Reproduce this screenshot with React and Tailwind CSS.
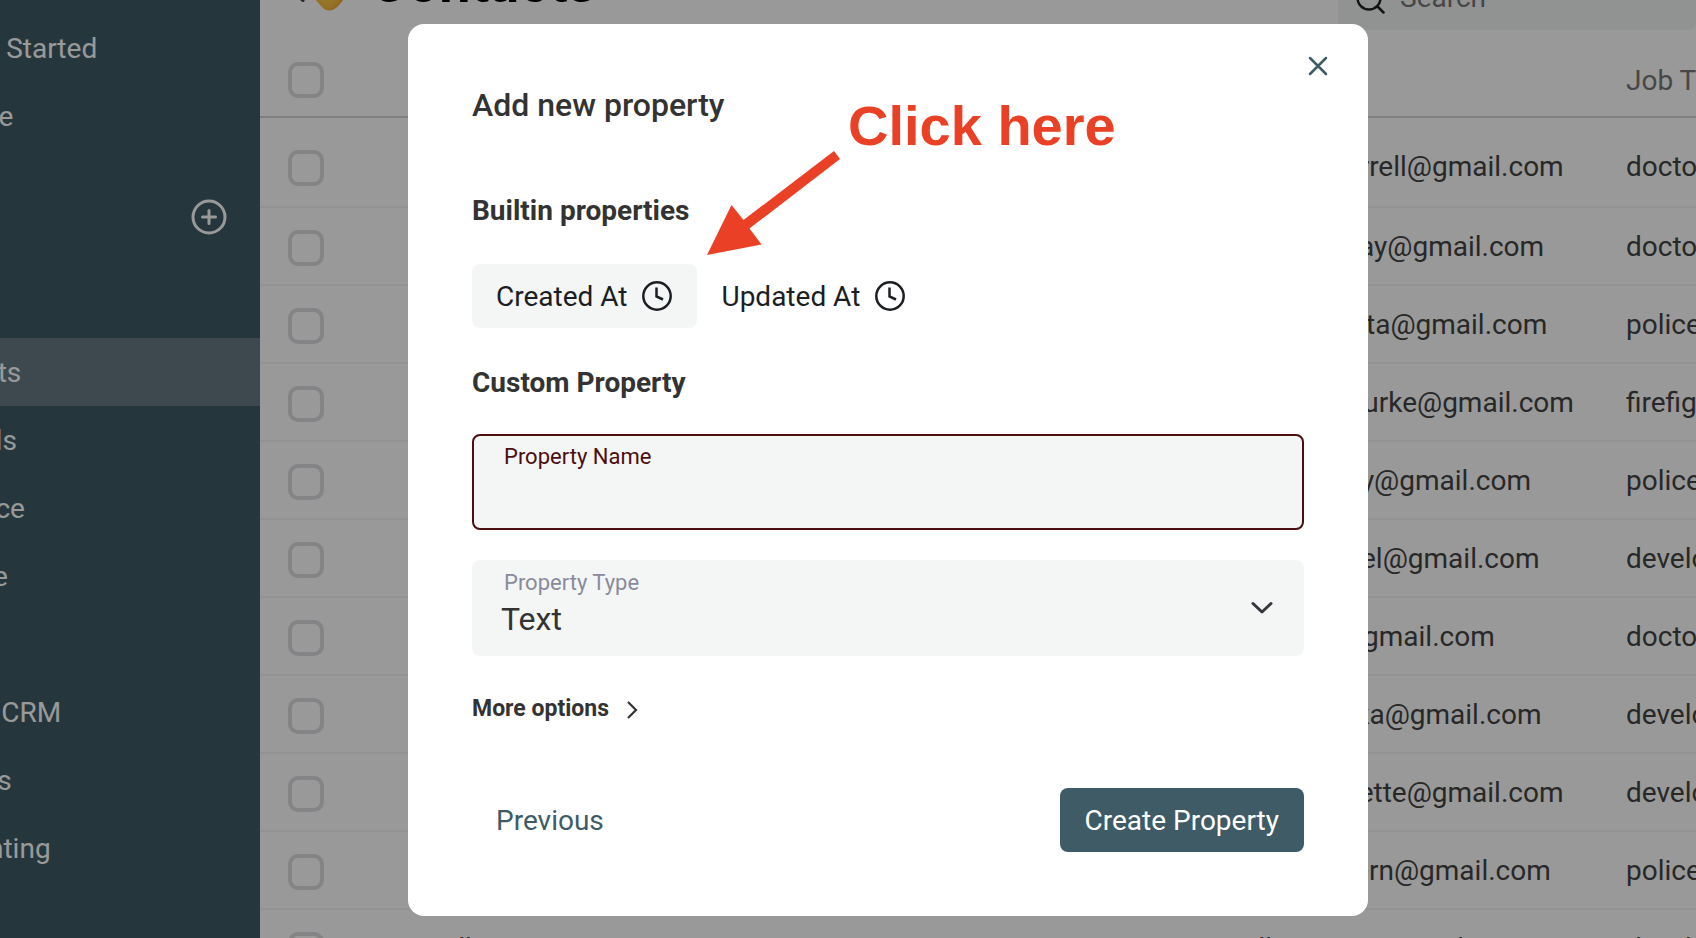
import React from "react";

const primaryLinks = ["Getting Started", "Upgrade"];
const navLinks = ["Contacts", "Rewards", "Audience", "Pipeline"];
const appLinks = ["Simple CRM", "Projects", "Accounting"];

const contacts = [
  ["Stephan", "Farrell", "stephan.farrell@gmail.com", "doctor"],
  ["Thomas", "Shay", "thomas.shay@gmail.com", "doctor"],
  ["Maria", "Acosta", "maria.acosta@gmail.com", "police officer"],
  ["Margaret", "Burke", "margaret.burke@gmail.com", "firefighter"],
  ["Henry", "Bailey", "henry.bailey@gmail.com", "police officer"],
  ["Olivia", "Michel", "olivia.michel@gmail.com", "developer"],
  ["Adam", "Fry", "adam.fry@gmail.com", "doctor"],
  ["Anton", "Slavka", "anton.slavka@gmail.com", "developer"],
  ["Laura", "Bonnette", "laura.bonnette@gmail.com", "developer"],
  ["John", "Northern", "john.northern@gmail.com", "police officer"],
  ["Millie", "Cross", "millie.cross@gmail.com", "developer"],
];

function NavLink({ label, active }) {
  return (
    <li>
      <a
        href="#"
        aria-current={active ? "page" : undefined}
        className={
          active
            ? "flex h-[68px] items-center bg-[#677b83] pt-0.5 text-white"
            : "flex h-[68px] items-center pt-0.5 text-white"
        }
      >
        <span className="-ml-[91px] whitespace-nowrap">{label}</span>
      </a>
    </li>
  );
}

function Sidebar() {
  return (
    <nav className="w-[260px] shrink-0 overflow-hidden bg-[#3e5b66] pt-[14px] text-[28px]">
      <ul>
        {primaryLinks.map((l) => (
          <NavLink key={l} label={l} />
        ))}
      </ul>
      <div className="mt-8 mb-[88px] flex h-[68px] items-center justify-end pt-0.5 pr-8">
        <button type="button" aria-label="Add object" className="text-white">
          <svg width="38" height="38" viewBox="0 0 38 38" fill="none" stroke="currentColor" strokeWidth="3" strokeLinecap="round">
            <circle cx="19" cy="19" r="16" />
            <path d="M19 12.5v13M12.5 19h13" />
          </svg>
        </button>
      </div>
      <ul>
        {navLinks.map((l) => (
          <NavLink key={l} label={l} active={l === "Contacts"} />
        ))}
      </ul>
      <ul className="mt-[68px]">
        {appLinks.map((l) => (
          <NavLink key={l} label={l} />
        ))}
      </ul>
    </nav>
  );
}

function Checkbox({ label }) {
  return (
    <input
      type="checkbox"
      aria-label={label}
      className="block size-9 appearance-none rounded-[10px] border-4 border-[#dcdddf]"
    />
  );
}

function ContactsPage() {
  return (
    <main className="min-w-0 flex-1 overflow-hidden bg-white">
      <header className="-mt-[50px] flex h-20 items-end justify-between">
        <div className="flex items-end pb-4 pl-7">
          <svg width="18" height="40" viewBox="0 0 18 40" className="mb-3" fill="none" stroke="#4a4a4a" strokeWidth="3" strokeLinecap="round">
            <path d="M15 20L4 29.500L15 38.500" />
          </svg>
          <svg width="46" height="52" viewBox="0 0 46 52" className="mb-0.5">
            <defs>
              <radialGradient id="gold" cx="0.45" cy="0.55" r="0.6">
                <stop offset="0" stopColor="#ffdc50" />
                <stop offset="0.7" stopColor="#f5b73c" />
                <stop offset="1" stopColor="#d07818" />
              </radialGradient>
            </defs>
            <path d="M3 26C3 10 12 4 22 4s19 8 19 22c0 8-3 14-8 19-5 6-12 8-18 1C10 40 3 34 3 26z" fill="url(#gold)" />
          </svg>
          <h1 className="ml-[18px] font-[Inter,sans-serif] text-[51px] leading-[60px] font-bold text-black">Contacts</h1>
        </div>
        <label className="flex h-20 w-[358px] items-end gap-3.5 rounded-lg bg-[#f1f6f4] pb-4 pl-[18px]">
          <svg width="30" height="30" viewBox="0 0 30 30" className="shrink-0" fill="none" stroke="#222" strokeWidth="2.500" strokeLinecap="round">
            <circle cx="13" cy="14" r="11.500" />
            <path d="M21.500 22.500L27.500 28.500" />
          </svg>
          <input
            type="search"
            aria-label="Search"
            placeholder="Search"
            className="h-8 w-full min-w-0 bg-transparent text-[28px] leading-8 outline-none placeholder:text-[#777]"
          />
        </label>
      </header>
      <table className="mt-3 w-[1766px] table-fixed border-separate border-spacing-0 text-left text-[28px] leading-[34px] text-[#444]">
        <colgroup>
          <col className="w-[167px]" />
          <col className="w-[400px]" />
          <col className="w-[400px]" />
          <col className="w-[399px]" />
          <col className="w-[400px]" />
        </colgroup>
        <thead>
          <tr>
            <th className="border-b-2 border-[#d6d6d6] pt-5 pb-[18px] pl-7">
              <Checkbox label="Select all" />
            </th>
            {["First Name", "Last Name", "Email", "Job Title"].map((h) => (
              <th key={h} className="border-b-2 border-[#d6d6d6] pt-5 pb-4 font-normal text-[#777]">
                {h}
              </th>
            ))}
          </tr>
        </thead>
        <tbody>
          {contacts.map((row, i) => {
            const pad =
              i === 0
                ? "border-b-2 border-[#f3f3f3] pt-8 pb-5 align-top"
                : "border-b-2 border-[#f3f3f3] pt-[22px] pb-[18px] align-top";
            return (
              <tr key={row[2]}>
                <td className={pad + " pl-7"}>
                  <Checkbox label={"Select " + row[0]} />
                </td>
                {row.map((cell, j) => (
                  <td key={j} className={pad}>
                    {cell}
                  </td>
                ))}
              </tr>
            );
          })}
        </tbody>
      </table>
    </main>
  );
}

function ClockIcon() {
  return (
    <svg width="32" height="32" viewBox="0 0 32 32" fill="none" stroke="currentColor" strokeWidth="2.500">
      <circle cx="16" cy="16" r="13.700" />
      <path d="M15.500 7.500V16.500L22 19.500" />
    </svg>
  );
}

function Annotation() {
  return (
    <>
      <svg className="pointer-events-none absolute top-[120px] left-[290px]" width="150" height="120" viewBox="0 0 150 120" fill="#ea4025" aria-hidden="true">
        <path d="M136 7L142 15L51.500 84.500L63.500 100.500L9 111L33.500 61L45.500 76Z" />
      </svg>
      <p className="pointer-events-none absolute top-[70px] left-[440px] font-['Liberation_Sans',sans-serif] text-[56px] leading-[64px] font-bold whitespace-nowrap text-[#ea4025]">
        Click here
      </p>
    </>
  );
}

function AddPropertyDialog() {
  return (
    <form
      role="dialog"
      aria-labelledby="dialog-title"
      className="relative flex w-full max-w-[960px] flex-col rounded-2xl bg-white px-16 pt-[60px] pb-16 text-[#333]"
    >
      <button type="button" aria-label="Close" className="absolute top-[26px] right-[34px] p-1 text-[#3e5b66]">
        <svg width="24" height="24" viewBox="0 0 24 24" fill="none" stroke="currentColor" strokeWidth="2.500" strokeLinecap="round">
          <path d="M4 4L20 20M20 4L4 20" />
        </svg>
      </button>
      <h2 id="dialog-title" className="text-[32px] leading-[42px] font-medium">Add new property</h2>

      <h3 className="mt-[68px] text-[28px] leading-[34px] font-bold">Builtin properties</h3>
      <div className="mt-9 flex text-[28px] text-[#1b1e23]">
        <button type="button" className="flex h-16 items-center gap-3.5 rounded-lg bg-[#f4f6f5] px-6">
          <span className="pt-0.5">Created At</span> <ClockIcon />
        </button>
        <button type="button" className="flex h-16 items-center gap-3.5 rounded-lg px-6">
          <span className="pt-0.5">Updated At</span> <ClockIcon />
        </button>
      </div>

      <h3 className="mt-[38px] text-[28px] leading-[34px] font-bold">Custom Property</h3>
      <div className="mt-[34px] flex h-24 flex-col rounded-lg border-2 border-[#4c0e10] bg-[#f4f6f5] px-[30px] pt-[9px]">
        <label htmlFor="property-name" className="text-[22px] leading-6 text-[#4c0e10]">Property Name</label>
        <input id="property-name" type="text" className="mt-1 h-10 bg-transparent text-[32px] outline-none" />
      </div>
      <div className="relative mt-[30px] flex h-24 flex-col rounded-lg border-2 border-[#f4f6f5] bg-[#f4f6f5] px-[30px] pt-[9px]">
        <label htmlFor="property-type" className="text-[22px] leading-6 text-[#898b9d]">Property Type</label>
        <select id="property-type" className="mt-1 -ml-[3px] h-10 appearance-none bg-transparent text-[32px] leading-10 outline-none">
          <option>Text</option>
        </select>
        <svg className="pointer-events-none absolute top-[34px] right-[26px]" width="28" height="24" viewBox="0 0 28 24" fill="none" stroke="#33363c" strokeWidth="3" strokeLinecap="round" strokeLinejoin="round">
          <path d="M5 7.500L14 16L23 7.500" />
        </svg>
      </div>

      <button type="button" className="mt-9 flex items-center gap-4 self-start text-[23px] leading-8 font-bold">
        <span className="pt-0.5 leading-[30px]">More options</span>
        <svg width="16" height="20" viewBox="0 0 16 20" className="mt-1" fill="none" stroke="currentColor" strokeWidth="2.200">
          <path d="M3 2L11 10L3 18" />
        </svg>
      </button>

      <div className="mt-16 flex justify-between text-[28px]">
        <button type="button" className="h-16 rounded-lg px-6 pt-0.5 text-[#3e5b66]">Previous</button>
        <button type="submit" className="h-16 rounded-lg bg-[#3e5b66] px-[25px] pt-0.5 text-white">Create Property</button>
      </div>
      <Annotation />
    </form>
  );
}

export default function App() {
  return (
    <div className="relative flex h-screen overflow-hidden font-[Roboto,sans-serif]">
      <Sidebar />
      <ContactsPage />
      <div className="absolute inset-0 flex items-center justify-center bg-black/40 pt-0.5 pl-20">
        <AddPropertyDialog />
      </div>
    </div>
  );
}
